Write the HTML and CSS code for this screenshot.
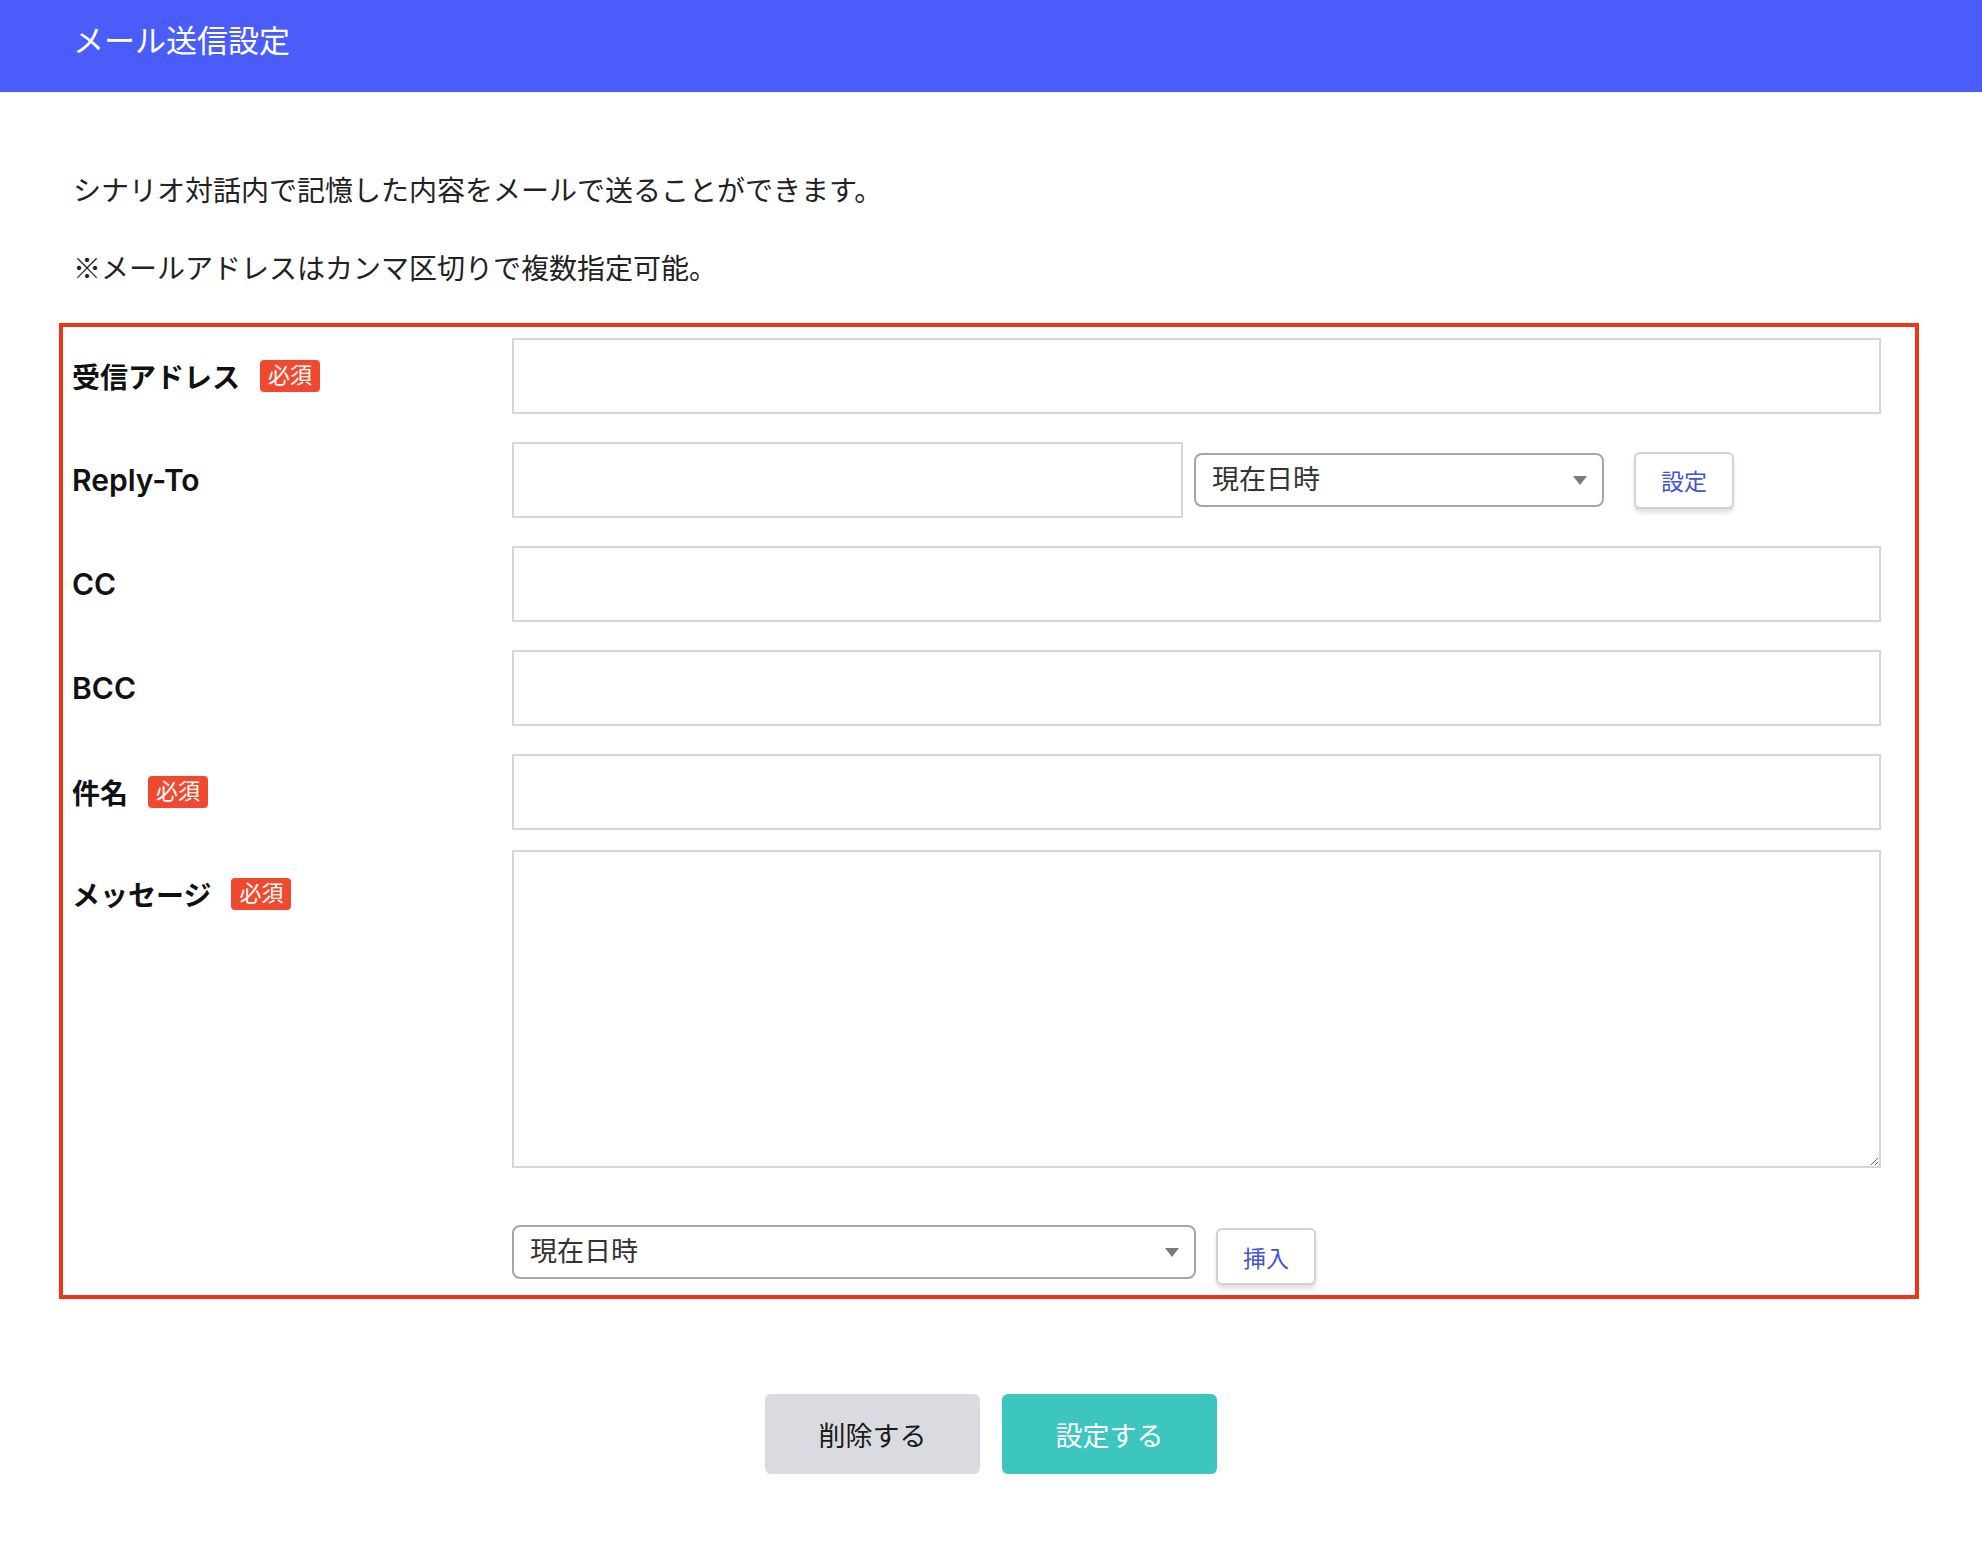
FILE: index.html
```html
<!DOCTYPE html>
<html lang="ja">
<head>
  <meta charset="UTF-8">
  <meta name="viewport" content="width=device-width, initial-scale=1.0">
  <title>メール送信設定</title>
  <link rel="stylesheet" href="styles.css">
</head>
<body>
  <header class="page-header">
    <h1>メール送信設定</h1>
  </header>

  <main class="content">
    <p class="lead">シナリオ対話内で記憶した内容をメールで送ることができます。</p>
    <p class="lead">※メールアドレスはカンマ区切りで複数指定可能。</p>

    <!-- 入力フォーム -->
    <form class="mail-form">
      <div class="form-row">
        <label class="form-label">受信アドレス<span class="badge">必須</span></label>
        <div class="form-field"><input type="text" class="text-input"></div>
      </div>

      <div class="form-row">
        <label class="form-label label-latin">Reply-To</label>
        <div class="form-field field-inline">
          <input type="text" class="text-input input-half">
          <div class="select-wrap select-short">
            <select class="select-box">
              <option>現在日時</option>
            </select>
          </div>
          <button type="button" class="btn-small btn-set">設定</button>
        </div>
      </div>

      <div class="form-row">
        <label class="form-label label-latin">CC</label>
        <div class="form-field"><input type="text" class="text-input"></div>
      </div>

      <div class="form-row">
        <label class="form-label label-latin">BCC</label>
        <div class="form-field"><input type="text" class="text-input"></div>
      </div>

      <div class="form-row row-subject">
        <label class="form-label">件名<span class="badge">必須</span></label>
        <div class="form-field"><input type="text" class="text-input"></div>
      </div>

      <div class="form-row row-message">
        <label class="form-label">メッセージ<span class="badge">必須</span></label>
        <div class="form-field">
          <textarea class="text-area"></textarea>
          <div class="insert-row">
            <div class="select-wrap select-long">
              <select class="select-box">
                <option>現在日時</option>
              </select>
            </div>
            <button type="button" class="btn-small">挿入</button>
          </div>
        </div>
      </div>
    </form>

    <!-- ボタン -->
    <div class="actions">
      <button type="button" class="btn btn-delete">削除する</button>
      <button type="button" class="btn btn-save">設定する</button>
    </div>
  </main>
</body>
</html>
```

FILE: styles.css
```css
body {
  margin: 0;
  font-family: 'Liberation Sans', 'Noto Sans CJK JP', sans-serif;
  color: #222;
  background-color: white;
}
.page-header {
  background-color: #4a5dfb; /* blue bar */
  height: 92px;
  padding-left: 73px;
}
.page-header h1 {
  margin: 0;
  font-size: 31px;
  font-weight: normal;
  line-height: 84px;
  color: white;
}
.content {
  padding-top: 80px;
  padding-bottom: 60px;
}
.lead {
  margin: 0 0 38px 73px;
  font-size: 28px;
  line-height: 40px;
  color: #222;
}
.lead + .lead {
  margin-bottom: 0;
}
.mail-form {
  box-sizing: border-box;
  width: 1860px;
  margin: 33px 0 0 59px;
  padding: 11px 34px 10px 9px;
  border: 4px solid #ef3419; /* red frame */
}
.form-row {
  display: flex;
  align-items: flex-start;
  margin-bottom: 28px;
}
.form-row:last-child {
  margin-bottom: 0;
}
.row-subject {
  margin-bottom: 20px;
}
.form-label {
  width: 440px;
  flex-shrink: 0;
  display: flex;
  align-items: center;
  height: 76px;
  font-size: 28px;
  font-weight: bold;
  color: #111;
}
.label-latin {
  font-family: 'Inter', 'Liberation Sans', sans-serif;
  font-size: 30px;
  font-weight: 600;
}
.row-message .form-label {
  padding-top: 6px;
}
.badge {
  margin-left: 20px;
  padding: 0 8px;
  height: 32px;
  line-height: 32px;
  font-size: 22px;
  font-weight: normal;
  color: white;
  background-color: #ef4a30;
  border-radius: 4px;
}
.form-field {
  flex: 1;
}
.field-inline {
  display: flex;
  align-items: center;
}
.text-input {
  box-sizing: border-box;
  display: block;
  width: 100%;
  height: 76px;
  border: 2px solid #d6d6d6;
  border-radius: 0;
  padding: 0 16px;
  font-size: 28px;
  font-family: inherit;
}
.input-half {
  width: 671px;
  flex-shrink: 0;
}
.text-area {
  box-sizing: border-box;
  display: block;
  width: 100%;
  height: 318px;
  border: 2px solid #d6d6d6;
  border-radius: 0;
  padding: 12px 16px;
  font-size: 28px;
  font-family: inherit;
}
.select-wrap {
  position: relative;
  flex-shrink: 0;
}
.select-wrap::after {
  content: "";
  position: absolute;
  right: 17px;
  top: 23px;
  border-left: 7px solid transparent;
  border-right: 7px solid transparent;
  border-top: 9px solid #7a7a7a;
  pointer-events: none;
}
.select-short {
  width: 410px;
  margin-left: 11px;
}
.select-long {
  width: 684px;
}
.select-box {
  appearance: none;
  -webkit-appearance: none;
  box-sizing: border-box;
  width: 100%;
  height: 54px;
  padding: 0 40px 0 16px;
  border: 2px solid #a6a6a6;
  border-radius: 8px;
  background-color: white;
  font-size: 27px;
  font-family: inherit;
  color: #333;
}
.btn-small {
  box-sizing: border-box;
  width: 100px;
  height: 57px;
  margin-left: 30px;
  border: 2px solid #d2d2d2;
  border-radius: 6px;
  background-color: white;
  box-shadow: 0 4px 4px rgba(0, 0, 0, 0.12);
  font-size: 23px;
  font-family: inherit;
  color: #4352d9; /* blue text */
  cursor: pointer;
}
.insert-row {
  display: flex;
  align-items: flex-start;
  margin-top: 57px;
}
.insert-row .btn-small {
  margin-left: 20px;
  margin-top: 3px;
}
.actions {
  display: flex;
  justify-content: center;
  gap: 22px;
  margin-top: 95px;
}
.btn {
  width: 215px;
  height: 80px;
  border: none;
  border-radius: 6px;
  font-size: 27px;
  font-family: inherit;
  cursor: pointer;
}
.btn-delete {
  background-color: #d9dbe1;
  color: #1a1a1a;
}
.btn-save {
  background-color: #3cc6bf; /* teal */
  color: white;
}
```
